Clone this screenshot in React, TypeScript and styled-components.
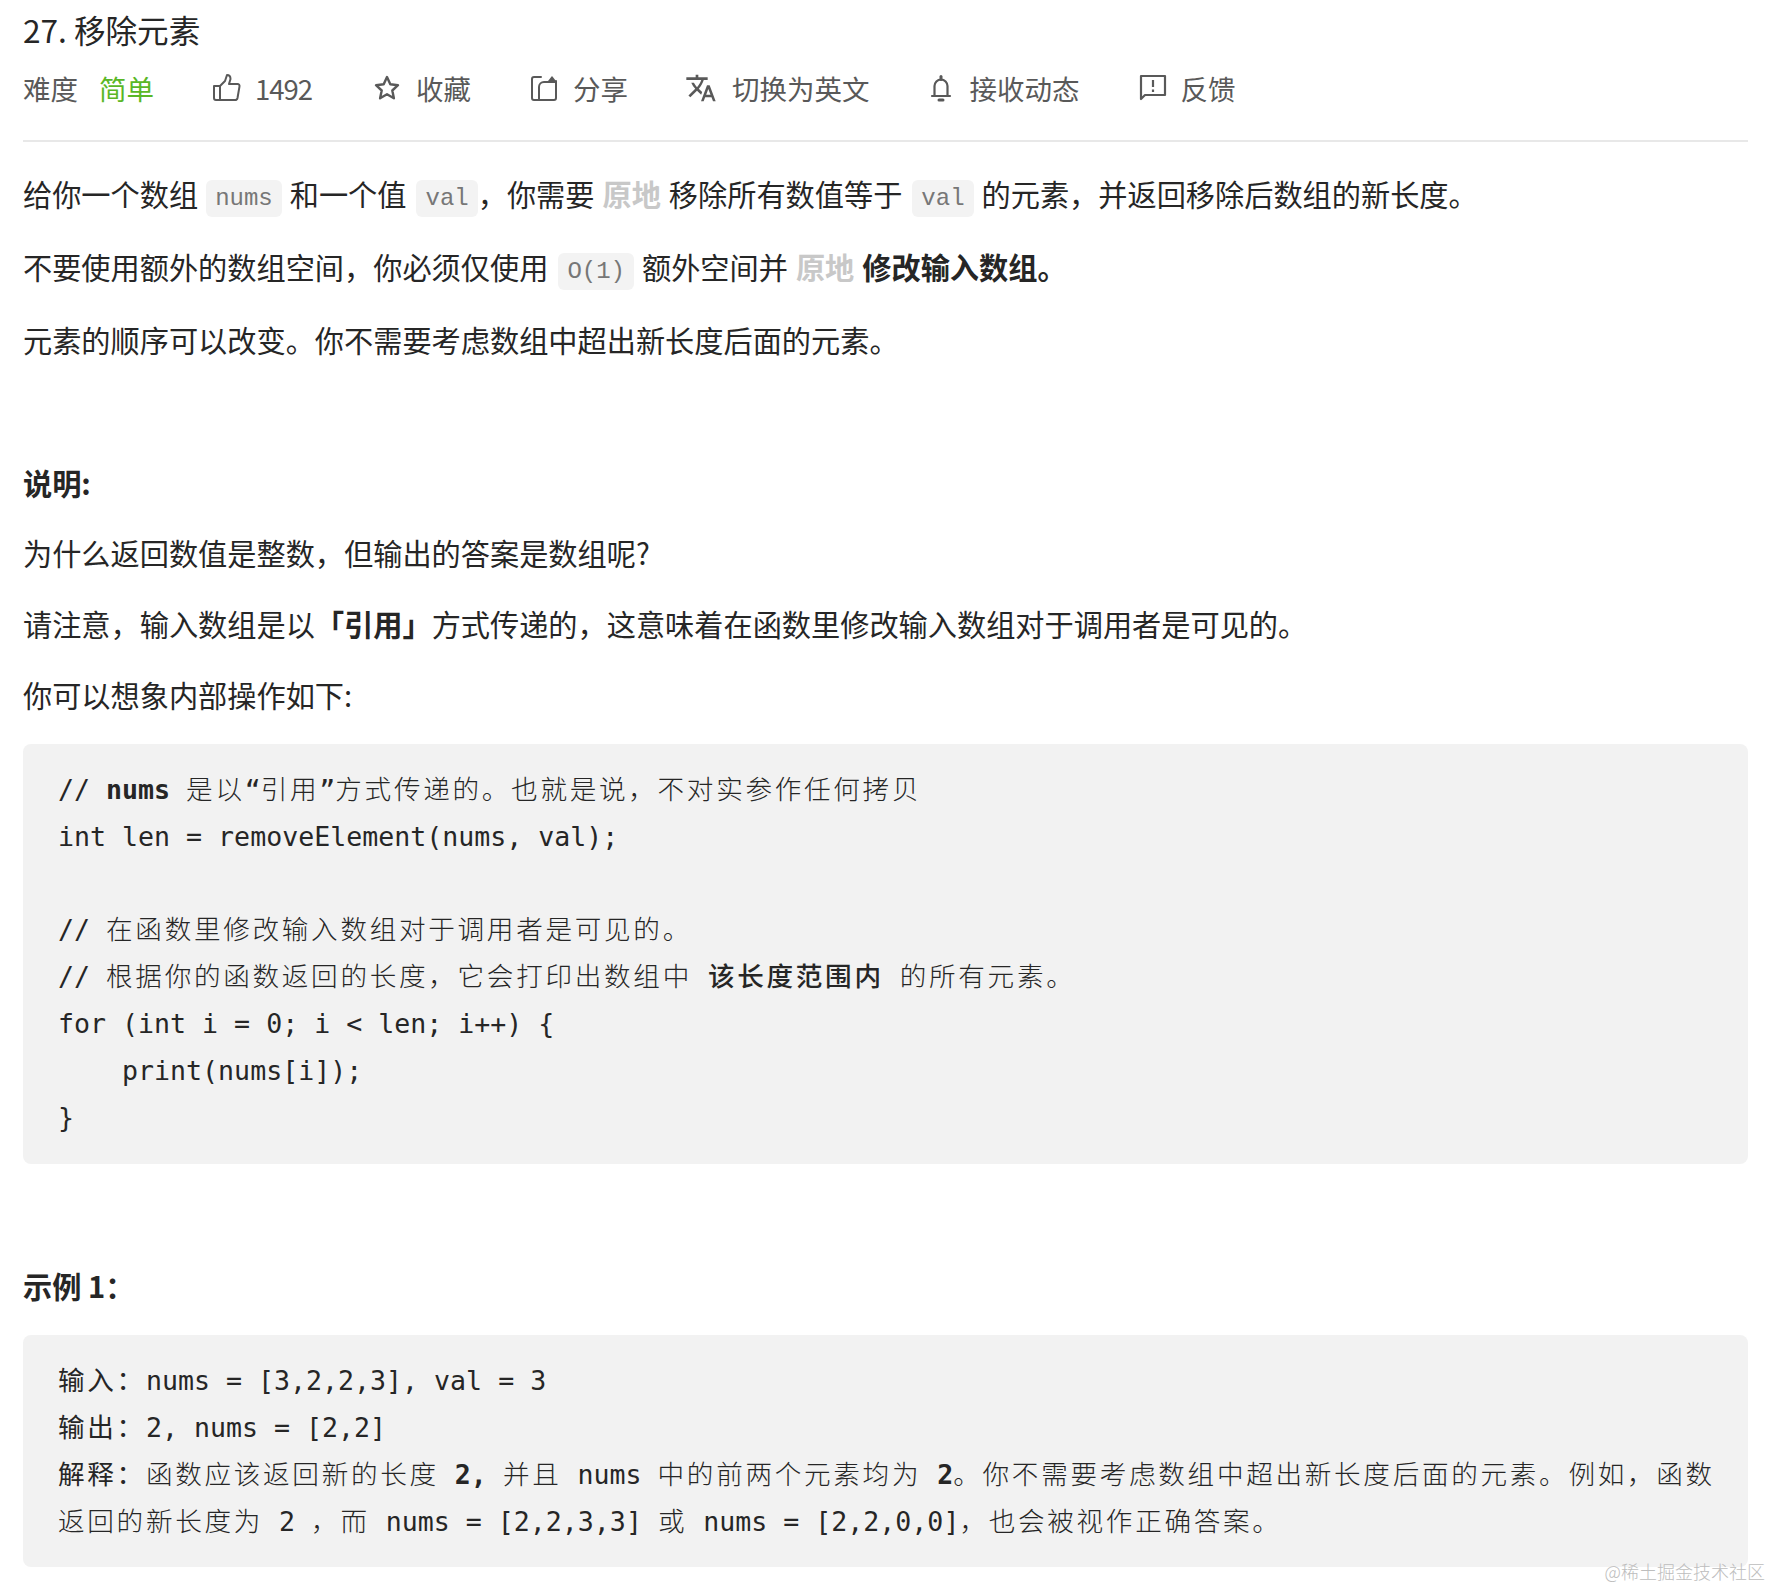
import React from "react";
import styled, { createGlobalStyle } from "styled-components";

const Global = createGlobalStyle`
  html, body { margin: 0; padding: 0; background: #fff; }
  body { font-family: "Noto Sans CJK SC", "Liberation Sans", sans-serif; }
`;

const Page = styled.div`
  position: relative;
  box-sizing: border-box;
  width: 1771px;
  height: 1588px;
  padding: 0 23px;
  overflow: hidden;
`;
const Title = styled.h1`
  margin: 0;
  height: 58px;
  line-height: 58px;
  font-size: 31.6px;
  font-weight: 400;
  color: #262626;
`;
const Meta = styled.div`
  display: flex;
  align-items: center;
  height: 59px;
  padding-bottom: 23px;
  border-bottom: 2px solid #e8e8e8;
  font-size: 27.5px;
  color: #595959;
`;
const Level = styled.span`
  color: #5ab726;
  margin-left: 21px;
  margin-right: 58px;
`;
const MetaItem = styled.span<{ $iconGap: number; $after?: number }>`
  display: inline-flex;
  align-items: center;
  gap: ${(p) => p.$iconGap}px;
  margin-right: ${(p) => p.$after ?? 0}px;
  svg { flex: none; }
`;
const Count = styled.span`
  letter-spacing: -1px;
`;
const Para = styled.p<{ $mb?: number }>`
  margin: 0 0 ${(p) => p.$mb ?? 27}px;
  height: 46px;
  line-height: 46px;
  font-size: 29.2px;
  color: #262626;
  white-space: nowrap;
`;
const Lead = styled.div`
  padding-top: 28px;
`;
const Heading = styled.h3<{ $top: number; $bottom: number }>`
  margin: ${(p) => p.$top}px 0 ${(p) => p.$bottom}px;
  height: 46px;
  line-height: 46px;
  font-size: 29.2px;
  font-weight: 700;
  color: #262626;
`;
const Inline = styled.code<{ $first?: boolean; $tight?: boolean }>`
  display: inline-block;
  height: 37px;
  line-height: 37px;
  padding: 0 9px;
  margin: 0 ${(p) => (p.$tight ? 0 : 8)}px 0 ${(p) => (p.$first ? 8 : 10)}px;
  border-radius: 6px;
  background: #f3f3f3;
  color: #777;
  font-family: "Liberation Mono", monospace;
  font-size: 24px;
  vertical-align: 1px;
`;
const Faint = styled.strong`
  color: #c8c8c8;
  font-weight: 700;
  margin: 0 8px;
`;
const Strong = styled.strong`
  font-weight: 700;
`;
const Block = styled.pre<{ $padBottom?: number }>`
  margin: 0;
  padding: 23px 35px ${(p) => p.$padBottom ?? 23}px;
  border-radius: 8px;
  background: #f2f2f2;
  font-family: "DejaVu Sans Mono", monospace;
  font-size: 26.6px;
  line-height: 46.8px;
  color: #262626;
  white-space: pre;
`;
const Han = styled.span`
  font-family: "Noto Sans CJK SC", sans-serif;
  font-weight: 300;
  line-height: 1;
  letter-spacing: 2.7px;
  color: #262626;
`;
const Label = styled(Han)`
  font-weight: 400;
`;
const HanBold = styled(Han)`
  font-weight: 500;
`;
const Bold = styled.b`
  font-weight: 700;
`;
const Watermark = styled.div`
  position: absolute;
  right: 6px;
  bottom: 5px;
  font-size: 18px;
  line-height: 24px;
  color: #bdbdbd;
  font-weight: 300;
`;

const cjk = /([\u3000-\u9fff\uff00-\uffef]+)/;
const T = ({ children }: { children: string }) => (
  <>{children.split(cjk).map((part, i) => (i % 2 ? <Han key={i}>{part}</Han> : part))}</>
);

const stroke = { fill: "none", stroke: "#595959", strokeWidth: 2, strokeLinejoin: "round" as const, strokeLinecap: "round" as const };

const ThumbIcon = () => (
  <svg width="30" height="30" viewBox="0 0 30 30" {...stroke}>
    <path d="M2 13h6v14H4a2 2 0 0 1-2-2V13z" />
    <path d="M8 13l5-5 2-6c2 0 3.500 1.500 3.500 4L17 11h8.500a2 2 0 0 1 2 2.400L25.500 25a2.500 2.500 0 0 1-2.500 2H8" />
  </svg>
);
const StarIcon = () => (
  <svg width="30" height="30" viewBox="0 0 30 30" {...stroke} strokeWidth={2.4}>
    <path d="M15 4l3.300 7.300 7.700.9-5.700 5.300 1.600 7.800L15 21.300 8.100 25.300l1.600-7.800L4 12.200l7.700-.9z" />
  </svg>
);
const ShareIcon = () => (
  <svg width="28" height="30" viewBox="0 0 28 30" {...stroke}>
    <path d="M11 4H4a2 2 0 0 0-2 2v19a2 2 0 0 0 2 2h20a2 2 0 0 0 2-2V8" />
    <path d="M9 27V14a5 5 0 0 1 5-5h11" />
    <path d="M22 3l4 5h-8" fill="#595959" stroke="none" />
  </svg>
);
const TranslateIcon = () => (
  <svg width="32" height="32" viewBox="0 0 24 24" fill="#595959">
    <path d="M12.870 15.070l-2.540-2.510.03-.03c1.740-1.940 2.980-4.170 3.710-6.530H17V4h-7V2H8v2H1v1.990h11.170C11.500 7.920 10.440 9.750 9 11.350 8.070 10.320 7.300 9.190 6.690 8h-2c.73 1.630 1.730 3.170 2.980 4.560l-5.090 5.020L4 19l5-5 3.110 3.110.76-2.040zM18.500 10h-2L12 22h2l1.120-3h4.750L21 22h2l-4.500-12zm-2.620 7l1.620-4.330L19.120 17h-3.240z" />
  </svg>
);
const BellIcon = () => (
  <svg width="24" height="30" viewBox="0 0 24 30" {...stroke} strokeWidth={2.2}>
    <path d="M3 23h18M5.500 23V13a6.500 6.500 0 0 1 13 0v10" />
    <path d="M12 3.500v3" strokeWidth={3} />
    <path d="M10 27h4" strokeWidth={3} />
  </svg>
);
const FeedbackIcon = () => (
  <svg width="28" height="30" viewBox="0 0 28 30" fill="none">
    <path d="M2 26V3h24v19H6l-4 4z" stroke="#595959" strokeWidth="2.200" strokeLinejoin="round" />
    <path d="M14 7v7M14 16.500v2.500" stroke="#595959" strokeWidth="2.200" />
  </svg>
);

export default function App() {
  return (
    <Page>
      <Global />
      <Title>27. 移除元素</Title>
      <Meta>
        <span>难度</span>
        <Level>简单</Level>
        <MetaItem $iconGap={13} $after={60}><ThumbIcon /><Count>1492</Count></MetaItem>
        <MetaItem $iconGap={14} $after={59}><StarIcon />收藏</MetaItem>
        <MetaItem $iconGap={15} $after={57}><ShareIcon />分享</MetaItem>
        <MetaItem $iconGap={15} $after={59}><TranslateIcon />切换为英文</MetaItem>
        <MetaItem $iconGap={17} $after={59}><BellIcon />接收动态</MetaItem>
        <MetaItem $iconGap={14}><FeedbackIcon />反馈</MetaItem>
      </Meta>
      <Lead>
        <Para>给你一个数组<Inline $first>nums</Inline>和一个值<Inline $tight>val</Inline>，你需要<Faint>原地</Faint>移除所有数值等于<Inline>val</Inline>的元素，并返回移除后数组的新长度。</Para>
        <Para>不要使用额外的数组空间，你必须仅使用<Inline>O(1)</Inline>额外空间并<Faint>原地</Faint><Strong>修改输入数组。</Strong></Para>
        <Para $mb={0}>元素的顺序可以改变。你不需要考虑数组中超出新长度后面的元素。</Para>
      </Lead>
      <Heading $top={97} $bottom={24}>说明:</Heading>
      <Para $mb={25}>为什么返回数值是整数，但输出的答案是数组呢?</Para>
      <Para $mb={25}>请注意，输入数组是以<Strong>「引用」</Strong>方式传递的，这意味着在函数里修改输入数组对于调用者是可见的。</Para>
      <Para $mb={27}>你可以想象内部操作如下:</Para>
      <Block>
        <T>{"// "}</T><Bold>nums</Bold> <T>{"是以“引用”方式传递的。也就是说，不对实参作任何拷贝"}</T>{"\n"}
        {"int len = removeElement(nums, val);\n\n"}
        <T>{"// 在函数里修改输入数组对于调用者是可见的。\n"}</T>
        <T>{"// 根据你的函数返回的长度，它会打印出数组中 "}</T><HanBold>该长度范围内</HanBold><T>{" 的所有元素。\n"}</T>
        {"for (int i = 0; i < len; i++) {\n    print(nums[i]);\n}"}
      </Block>
      <Heading $top={98} $bottom={27}>示例 1：</Heading>
      <Block $padBottom={21}>
        <Label>输入：</Label>{"nums = [3,2,2,3], val = 3\n"}
        <Label>输出：</Label>{"2, nums = [2,2]\n"}
        <Label>解释：</Label><T>{"函数应该返回新的长度 "}</T><Bold>2,</Bold><T>{" 并且 nums 中的前两个元素均为 "}</T><Bold>2</Bold><T>{"。你不需要考虑数组中超出新长度后面的元素。例如，函数\n"}</T>
        <T>{"返回的新长度为 2 ，而 nums = [2,2,3,3] 或 nums = [2,2,0,0]，也会被视作正确答案。"}</T>
      </Block>
      <Watermark>@稀土掘金技术社区</Watermark>
    </Page>
  );
}
